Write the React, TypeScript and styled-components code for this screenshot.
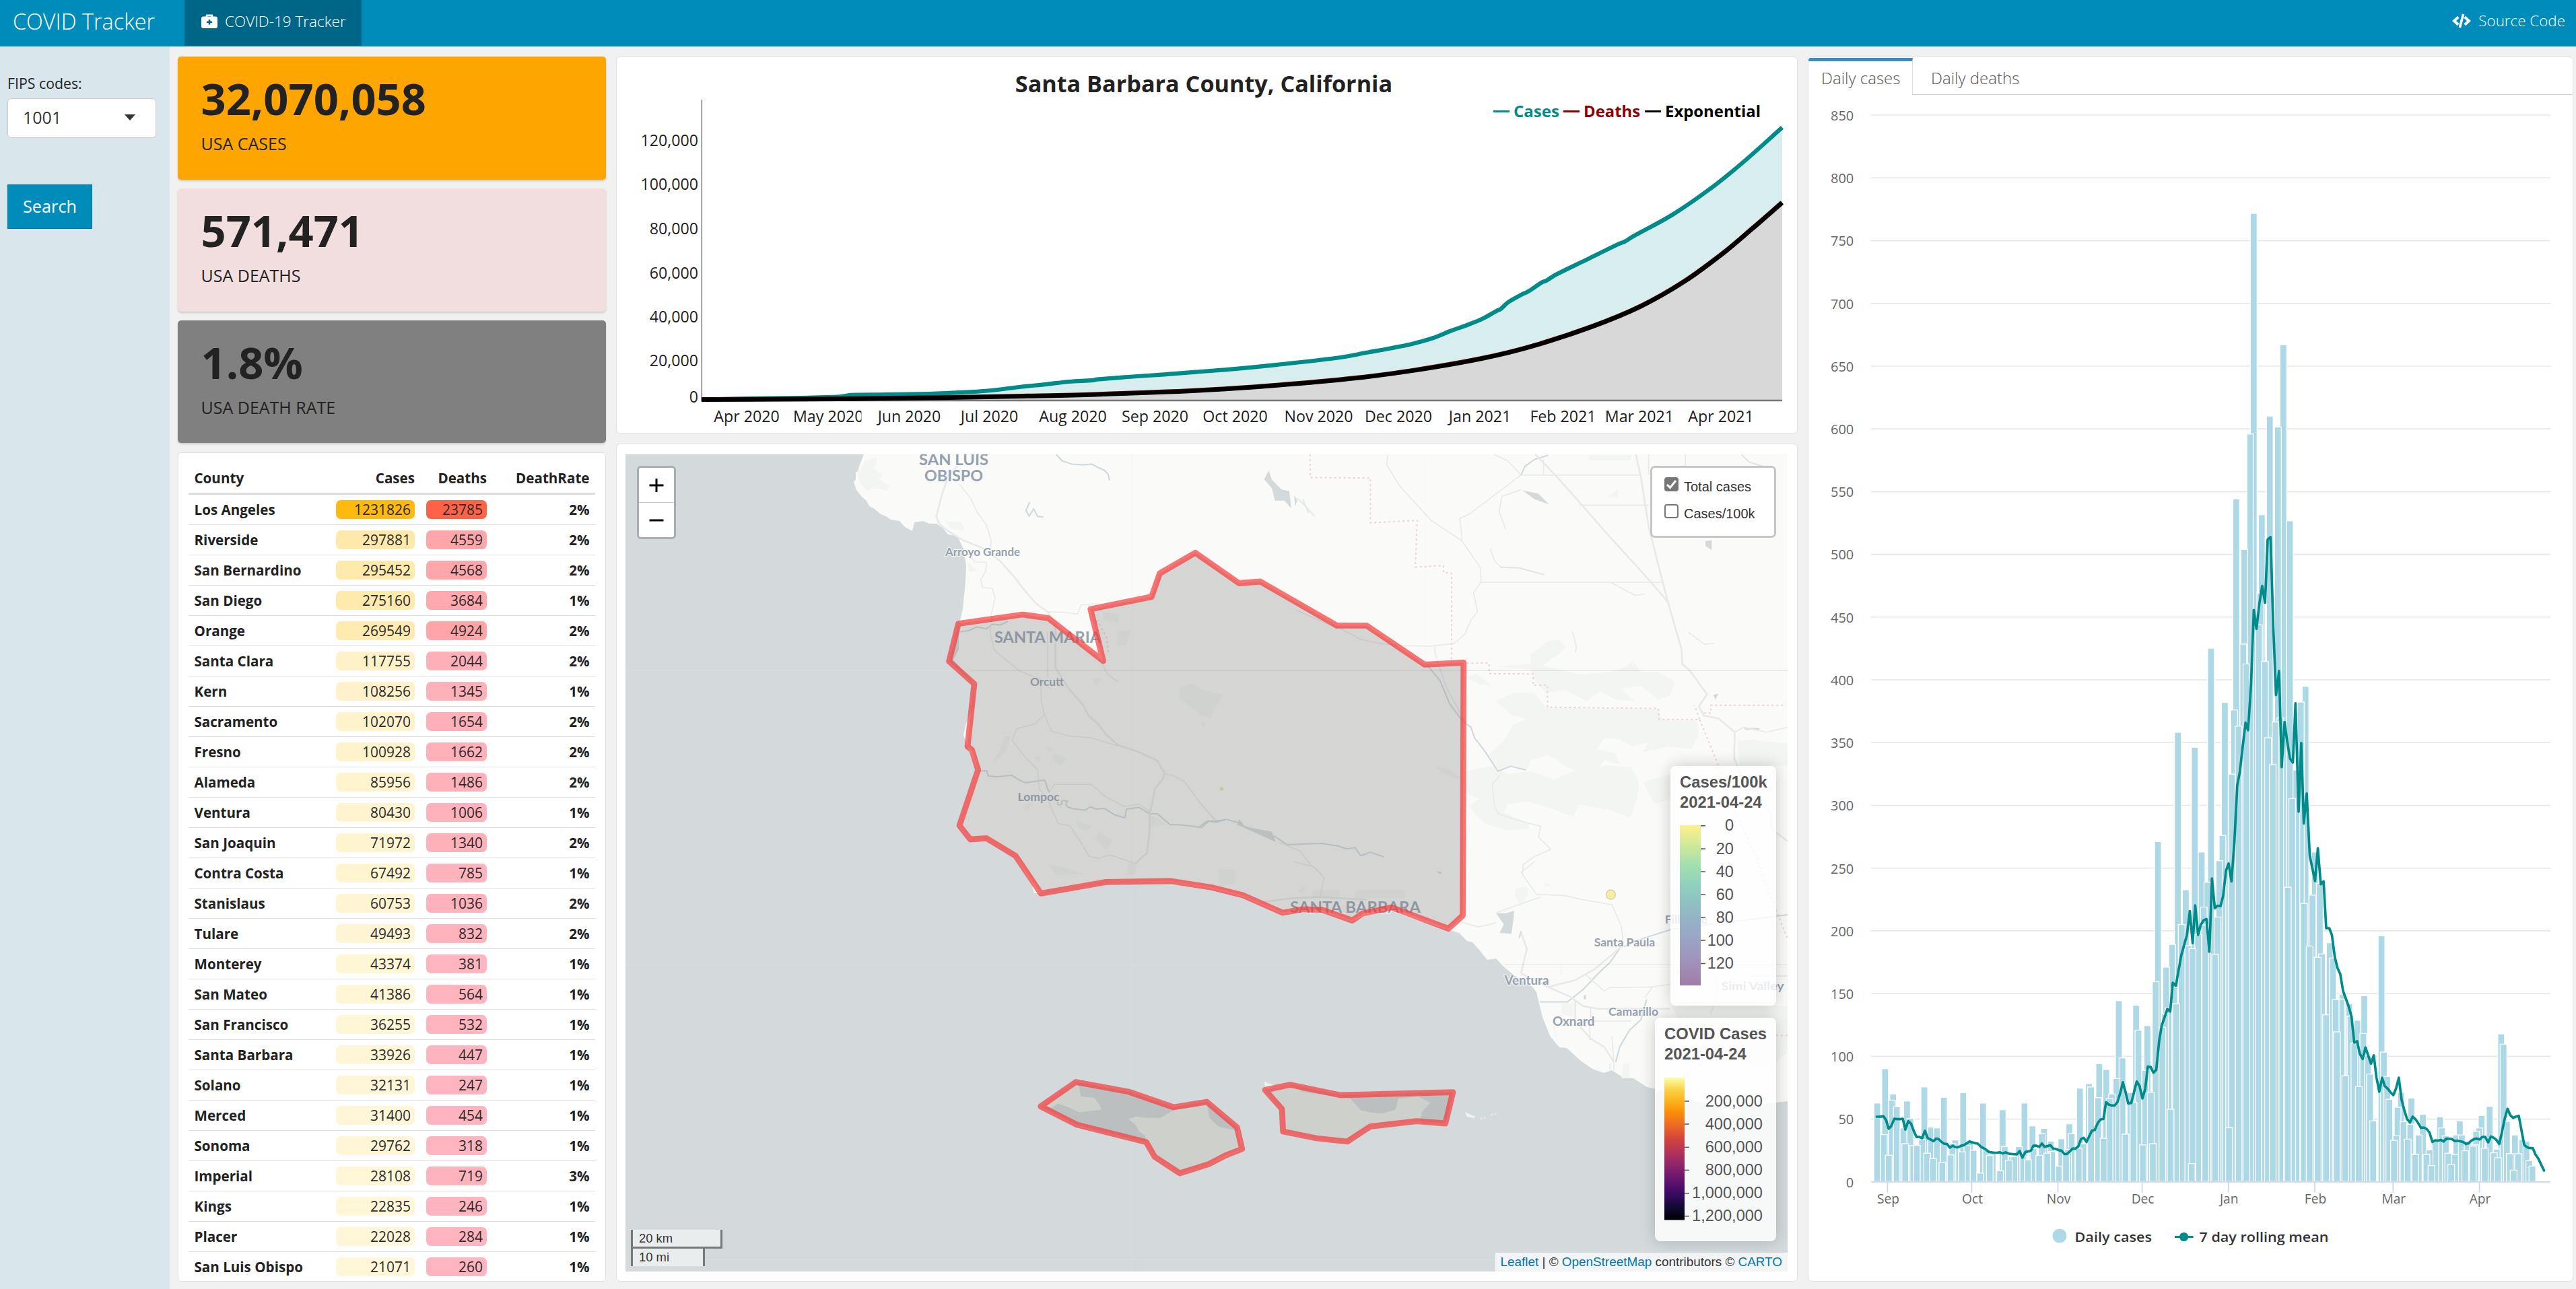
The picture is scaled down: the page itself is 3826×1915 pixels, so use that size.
import React from "react";
import styled, { createGlobalStyle } from "styled-components";

const GlobalStyle = createGlobalStyle`
  *, *::before, *::after { box-sizing: border-box; }
  html, body, #root { height: 100%; }
  body {
    margin: 0;
    background: #f1f1f1;
    color: #222;
    font-family: "Open Sans", "Noto Sans", sans-serif;
    overflow: hidden;
  }
`;

/* ---------- shell ---------- */

const Page = styled.div`
  width: 3826px;
  height: 1915px;
  display: flex;
  flex-direction: column;
`;

const Navbar = styled.header`
  flex: none;
  height: 69px;
  background: #008cba;
  border-bottom: 1px solid #0081ab;
  color: #fff;
  display: flex;
  align-items: stretch;
`;

const Brand = styled.div`
  width: 274px;
  padding-left: 19px;
  font-size: 32.4px;
  font-weight: 300;
  line-height: 63px;
  white-space: nowrap;
`;

const NavTab = styled.div`
  width: 263px;
  background: #006687;
  display: flex;
  align-items: center;
  gap: 11px;
  padding: 0 0 6px 25px;
  font-size: 22.5px;
  font-weight: 300;
  white-space: nowrap;
`;

const SourceLink = styled.div`
  margin-left: auto;
  padding: 0 16px 7px 0;
  display: flex;
  align-items: center;
  gap: 11px;
  font-size: 22.4px;
  font-weight: 300;
`;

const Body = styled.div`
  flex: 1;
  display: flex;
  min-height: 0;
`;

const Sidebar = styled.aside`
  flex: none;
  width: 252px;
  background: #d9e7ec;
  border-right: 1px solid #e2e8ea;
  padding: 41px 0 0 11px;
  display: flex;
  flex-direction: column;
  align-items: flex-start;
`;

const FieldLabel = styled.label`
  font-size: 21.3px;
  line-height: 28px;
  padding-left: 0;
  margin-bottom: 8px;
`;

const Select = styled.div`
  width: 221px;
  height: 59px;
  border: 1px solid #ccc;
  border-radius: 6px;
  background: #fff;
  display: flex;
  align-items: center;
  justify-content: space-between;
  padding: 0 30px 3px 22px;
  font-size: 25px;
  color: #333;
`;

const Caret = styled.span`
  border: 8px solid transparent;
  border-top: 9px solid #333;
  border-bottom: 0;
`;

const SearchButton = styled.button`
  width: 126px;
  height: 66px;
  margin-top: 69px;
  border: 1px solid #0079a1;
  background: #008cba;
  color: #fff;
  font: 400 25.3px "Open Sans", sans-serif;
  padding: 0 0 2px;
`;

const Dashboard = styled.main`
  flex: 1;
  display: grid;
  grid-template-columns: 636px 1755px 1137px;
  column-gap: 15px;
  padding: 15px 0 11px 12px;
`;

const Column = styled.section`
  display: flex;
  flex-direction: column;
  min-height: 0;
`;

const Card = styled.div<{ $h?: number; $gap?: number }>`
  background: #fff;
  border: 1px solid #e1e1e1;
  border-radius: 6px;
  flex: ${(p) => (p.$h ? "none" : "1")};
  height: ${(p) => (p.$h ? p.$h + "px" : "auto")};
  margin-bottom: ${(p) => p.$gap ?? 0}px;
  min-height: 0;
  overflow: hidden;
`;

/* ---------- value boxes ---------- */

const ValueBox = styled.div<{ $bg: string; $h: number; $gap: number }>`
  flex: none;
  height: ${(p) => p.$h}px;
  margin-bottom: ${(p) => p.$gap}px;
  background: ${(p) => p.$bg};
  border-radius: 5px;
  box-shadow: 0 2px 3px rgba(0, 0, 0, 0.16);
  padding: 24px 34.5px 0;
`;

const Value = styled.div`
  font-size: 65px;
  font-weight: 700;
  line-height: 76px;
`;

const Caption = styled.div`
  font-size: 25px;
  line-height: 30px;
  margin-top: 14px;
`;

/* ---------- county table ---------- */

const TableCard = styled(Card)`
  padding: 9px 15px 0;
`;

const Table = styled.table`
  width: 604px;
  table-layout: fixed;
  border-spacing: 0;
  font-size: 20.6px;
  font-weight: 700;
`;

const Th = styled.th<{ $w: number; $left?: boolean }>`
  width: ${(p) => p.$w}px;
  height: 53px;
  padding: 5px 8.5px 0;
  text-align: ${(p) => (p.$left ? "left" : "right")};
  font-weight: 700;
  border-bottom: 3px solid #ddd;
`;

const Td = styled.td<{ $left?: boolean }>`
  height: 45px;
  padding: 0 8.5px;
  text-align: ${(p) => (p.$left ? "left" : "right")};
  border-bottom: 1px solid #ddd;
`;

const Pill = styled.span`
  display: block;
  height: 28px;
  line-height: 29px;
  border-radius: 7px;
  padding-right: 6px;
  font-size: 21px;
  font-weight: 400;
  color: #2b2b2b;
`;

type County = [string, number, number, number];
const counties: County[] = [
  ["Los Angeles", 1231826, 23785, 2],
  ["Riverside", 297881, 4559, 2],
  ["San Bernardino", 295452, 4568, 2],
  ["San Diego", 275160, 3684, 1],
  ["Orange", 269549, 4924, 2],
  ["Santa Clara", 117755, 2044, 2],
  ["Kern", 108256, 1345, 1],
  ["Sacramento", 102070, 1654, 2],
  ["Fresno", 100928, 1662, 2],
  ["Alameda", 85956, 1486, 2],
  ["Ventura", 80430, 1006, 1],
  ["San Joaquin", 71972, 1340, 2],
  ["Contra Costa", 67492, 785, 1],
  ["Stanislaus", 60753, 1036, 2],
  ["Tulare", 49493, 832, 2],
  ["Monterey", 43374, 381, 1],
  ["San Mateo", 41386, 564, 1],
  ["San Francisco", 36255, 532, 1],
  ["Santa Barbara", 33926, 447, 1],
  ["Solano", 32131, 247, 1],
  ["Merced", 31400, 454, 1],
  ["Sonoma", 29762, 318, 1],
  ["Imperial", 28108, 719, 3],
  ["Kings", 22835, 246, 1],
  ["Placer", 22028, 284, 1],
  ["San Luis Obispo", 21071, 260, 1],
];

const mix = (a: number[], b: number[], t: number) =>
  `rgb(${a.map((v, i) => Math.round(v + (b[i] - v) * t)).join(",")})`;
const caseTint = (v: number) => mix([255, 248, 220], [255, 185, 15], v / 1231826);
const deathTint = (v: number) => mix([255, 182, 193], [255, 99, 71], v / 23785);

function CountyTable() {
  return (
    <TableCard>
      <Table>
        <thead>
          <tr>
            <Th $w={210.5} $left>County</Th>
            <Th $w={134}>Cases</Th>
            <Th $w={107}>Deaths</Th>
            <Th $w={152.5}>DeathRate</Th>
          </tr>
        </thead>
        <tbody>
          {counties.map(([name, cases, deaths, rate]) => (
            <tr key={name}>
              <Td $left>{name}</Td>
              <Td><Pill style={{ background: caseTint(cases) }}>{cases}</Pill></Td>
              <Td><Pill style={{ background: deathTint(deaths) }}>{deaths}</Pill></Td>
              <Td>{rate}%</Td>
            </tr>
          ))}
        </tbody>
      </Table>
    </TableCard>
  );
}

/* ---------- cumulative chart ---------- */

const ChartTitle = styled.h2`
  margin: 0;
  height: 60px;
  padding-top: 16px;
  font-size: 34.2px;
  line-height: 46px;
  font-weight: 700;
  text-align: center;
  padding-right: 9px;
  white-space: nowrap;
`;

const Svg = styled.svg`
  display: block;
  font-family: "Open Sans", "Noto Sans", sans-serif;
`;

type Pt = [number, number];

/* Catmull-Rom spline through the samples, written as cubic segments. */
const spline = (pts: Pt[]) =>
  pts.reduce((d, p, i) => {
    if (i === 0) return `M${p[0]} ${p[1]}`;
    const a = pts[Math.max(i - 2, 0)];
    const b = pts[i - 1];
    const n = pts[Math.min(i + 1, pts.length - 1)];
    const run = (p[0] - b[0]) / 3;
    const s1 = (p[1] - a[1]) / (p[0] - a[0] || 1);
    const s2 = (n[1] - b[1]) / (n[0] - b[0] || 1);
    return `${d}C${b[0] + run} ${b[1] + s1 * run} ${p[0] - run} ${p[1] - s2 * run} ${p[0]} ${p[1]}`;
  }, "");

const casePath = spline([[1042,593.5],[1117,592],[1190,591],[1244,589.7],[1256,588],[1263,586.8],[1320,586.2],[1378,585],[1420,583.3],[1467,580.5],[1518,574.5],[1555,570.8],[1588,567],[1624,564.8],[1629,563.6],[1675,560],[1729,556.3],[1825,548.8],[1897,541.8],[1991,531],[2030,523.8],[2065,517.5],[2097,511],[2128,502.3],[2155,491.5],[2180,482.5],[2202,473.5],[2224,461.3],[2229,459],[2240,449],[2261,437],[2267,434.5],[2273,431],[2290,419.5],[2296,417.3],[2310,408.5],[2355,386.5],[2405,362],[2413,359],[2425,351.5],[2484,319],[2542,279],[2589,241],[2647,189.4]]);
const expPath = spline([[1042,593.8],[1244,593],[1410,590.8],[1520,588.8],[1627,586.4],[1780,580.5],[1897,572.7],[2014,562],[2102,550.3],[2202,532.7],[2278,514],[2366,485],[2437,455.4],[2501,419],[2560,376],[2601,341.5],[2647,301.5]]);

const cumTicks: [string, number][] = [
  ["120,000", 208], ["100,000", 273.5], ["80,000", 339.5], ["60,000", 405],
  ["40,000", 470.5], ["20,000", 535.5], ["0", 589.7],
];
const cumMonths: [string, number][] = [
  ["Apr 2020", 1109], ["May 2020", 1229], ["Jun 2020", 1350.5], ["Jul 2020", 1469.5],
  ["Aug 2020", 1593.5], ["Sep 2020", 1715.5], ["Oct 2020", 1834.5], ["Nov 2020", 1958.5],
  ["Dec 2020", 2077], ["Jan 2021", 2198], ["Feb 2021", 2321.5], ["Mar 2021", 2435],
  ["Apr 2021", 2556],
];
const cumLegend: [string, string, number, number, number][] = [
  ["Cases", "#008b8b", 2218, 2248, 68],
  ["Deaths", "#8b0000", 2322, 2352, 84],
  ["Exponential", "#000", 2443, 2473, 142],
];

function CumulativeChart() {
  return (
    <Card $h={560} $gap={15}>
      <ChartTitle>Santa Barbara County, California</ChartTitle>
      <Svg width="1753" height="498" viewBox="916 145 1753 498">
        <path d={`${casePath}V595H1042Z`} fill="#d8eeee" />
        <path d={`${expPath}V595H1042Z`} fill="#d8d8d8" />
        <path d="M1042.5 148V596" stroke="#222" strokeWidth="1" shapeRendering="crispEdges" />
        <path d="M1042 595H2647" stroke="#777" strokeWidth="2.4" />
        <path d={casePath} fill="none" stroke="#008b8b" strokeWidth="6.2" />
        <path d={expPath} fill="none" stroke="#5a0000" strokeWidth="6.2" transform="translate(-0.4 -0.8)" />
        <path d={expPath} fill="none" stroke="#000" strokeWidth="6.2" />
        {cumTicks.map(([t, y]) => (
          <text key={t} x="1037" y={y + 8.5} textAnchor="end" fontSize="23.2" fill="#1c1c1c">{t}</text>
        ))}
        {cumMonths.map(([t, x], i) => (
          <React.Fragment key={t}>
            <clipPath id={`m${i}`}><rect x={x - 51} y="600" width="101.5" height="40" /></clipPath>
            <g clipPath={`url(#m${i})`}>
              <text x={t.startsWith("May") || t.startsWith("Nov") ? x - 51 : x}
                textAnchor={t.startsWith("May") || t.startsWith("Nov") ? "start" : "middle"}
                y="626.8" fontSize="23.2" fill="#1c1c1c">{t}</text>
            </g>
          </React.Fragment>
        ))}
        {cumLegend.map(([t, c, lx, tx, w]) => (
          <React.Fragment key={t}>
            <path d={`M${lx} 165.5h24`} stroke={c} strokeWidth="3" />
            <text x={tx} y="174" fontSize="23" fontWeight="700" fill={c} textLength={w} lengthAdjust="spacingAndGlyphs">{t}</text>
          </React.Fragment>
        ))}
      </Svg>
    </Card>
  );
}

/* ---------- map ---------- */

const MapFrame = styled.div`
  position: relative;
  width: 1726px;
  height: 1214px;
  margin: 15px 0 0 13px;
  font-family: "Liberation Sans", Arial, sans-serif;
`;

const ZoomControl = styled.div`
  position: absolute;
  left: 17px;
  top: 17px;
  width: 58px;
  height: 109px;
  border: 3px solid #a9aeb0;
  border-radius: 6px;
  background: #fff;
  display: grid;
  grid-template-rows: 51px 1fr;
`;

const ZoomKey = styled.div`
  display: flex;
  align-items: center;
  justify-content: center;
  & + & { border-top: 1px solid #ccc; }
`;

const LayerBox = styled.div`
  position: absolute;
  right: 17px;
  top: 17px;
  width: 187px;
  height: 107px;
  border: 3px solid #c6c6c5;
  border-radius: 7px;
  background: #fff;
  padding: 14px 0 0 18px;
  display: flex;
  flex-direction: column;
  gap: 16px;
`;

const LayerOption = styled.div`
  display: flex;
  gap: 8px;
  height: 24px;
  font-size: 20px;
  line-height: 28px;
  color: #333;
`;

const CheckBox = styled.span<{ $on?: boolean }>`
  width: 21px;
  height: 21px;
  border: 2px solid #767676;
  border-radius: 4px;
  background: ${(p) => (p.$on ? "#767676" : "#fff")};
  display: flex;
  align-items: center;
  justify-content: center;
`;

const Legend = styled.div<{ $top: number; $w: number; $h: number }>`
  position: absolute;
  right: 17px;
  top: ${(p) => p.$top}px;
  width: ${(p) => p.$w}px;
  height: ${(p) => p.$h}px;
  border-radius: 8px;
  background: rgba(255, 255, 255, 0.8);
  box-shadow: 0 0 23px rgba(0, 0, 0, 0.2);
  padding: 9px 0 0 14px;
  color: #555;
`;

const LegendTitle = styled.div`
  font-size: 23.8px;
  font-weight: 700;
  line-height: 30px;
  white-space: nowrap;
`;

const ScaleRow = styled.div<{ $gap: number }>`
  margin-top: ${(p) => p.$gap}px;
`;

const ScaleBars = styled.div`
  position: absolute;
  left: 8px;
  top: 1152px;
  font-size: 18.4px;
  color: #333;
`;

const ScaleLine = styled.div<{ $w: number; $last?: boolean }>`
  width: ${(p) => p.$w}px;
  height: ${(p) => (p.$last ? 26 : 28)}px;
  line-height: 25px;
  padding-left: 9px;
  background: rgba(255, 255, 255, 0.5);
  border: 3px solid #777;
  border-top: 0;
  border-bottom-width: ${(p) => (p.$last ? 0 : 3)}px;
`;

const Attribution = styled.div`
  position: absolute;
  right: 0;
  bottom: 0;
  height: 28px;
  padding: 0 8px;
  line-height: 28px;
  font-size: 18.9px;
  color: #333;
  white-space: nowrap;
  background: rgba(255, 255, 255, 0.7);
  a { color: #0078a8; }
`;

const county =
  "1423.4,926.6 1518.7,913 1557,918.4 1638.6,982 1619.7,905 1710.4,886.6 1722.5,851.9 1775.3,821.2 1840.3,866.5 1871.8,864 1985.5,929.4 2029.7,929.4 2115.8,987.4 2173.8,984.5 2172.5,1360.2 2151.3,1379.6 2066.9,1348 2023.9,1357 2008.4,1367.5 1963.6,1351.7 1935,1350.9 1905,1356 1846,1330 1800,1318.5 1739.7,1309 1643,1310.4 1546,1327.4 1508.4,1271.5 1465.3,1245.4 1441.2,1247 1425,1226.6 1452.7,1143.7 1443.5,1114 1437,1109 1447,1016 1409.6,982.5";
const westIsles =
  "1597.9,1607.5 1676.5,1622 1743,1645 1792.5,1637 1837.3,1674.9 1844.8,1707 1820,1716.6 1795,1729.6 1752.3,1743 1715,1718.6 1702.4,1696.7 1599.6,1671 1545.7,1643.7";
const eastIsle =
  "1879,1619.4 1916,1611.5 1990.6,1627 2158,1622.6 2146.7,1669 2104,1665.6 2035,1673.7 2001,1696 1955,1691 1905.6,1681 1904,1647.7";

const land =
  "M1283 675L1277 690 1274 700 1271 702 1271 712 1268 716 1272 728 1280 738 1287 744 1291 752 1299 756 1308 764 1316 767 1323 772 1336 774 1344 783 1355 789 1358 776 1371 774 1380 778 1391 778 1400 784 1408 794 1420 796 1424 801 1431 815 1435 840 1434 864 1430 905 1424 930 1424 965 1416 980 1447 1016 1446 1050 1435 1075 1431 1092 1437 1109 1452 1144 1425 1227 1441 1247 1465 1245 1508 1271 1533 1315 1536 1327 1546 1327 1643 1310 1740 1310 1800 1320 1846 1332 1905 1358 1930 1356 1964 1355 2008 1369 2030 1360 2067 1352 2090 1362 2151 1381 2167 1386 2179 1398 2187 1400 2196 1410 2209 1426 2222 1424 2233 1436 2243 1444 2253 1452 2276 1466 2282 1474 2285 1487 2291 1511 2302 1539 2316 1556 2327 1557 2348 1576 2365 1588 2382 1594 2394 1590 2411 1601 2426 1602 2446 1615 2460 1618 2517 1636 2552 1642 2569 1663 2589 1644 2638 1638 2655 1636V675Z";

type Label = [string, number, number, number, number];
const places: Label[] = [
  ["SAN LUIS", 1365, 691, 103, 21], ["OBISPO", 1373, 714.7, 87, 21],
  ["Arroyo Grande", 1404, 826, 111, 16], ["SANTA MARIA", 1477, 954.6, 158, 21],
  ["Orcutt", 1530, 1019, 50, 16], ["Lompoc", 1511.5, 1190, 62, 16],
  ["SANTA BARBARA", 1916, 1356, 194, 21], ["Ventura", 2234.5, 1462.5, 66, 17],
  ["Oxnard", 2306, 1524, 62.5, 17], ["Camarillo", 2389, 1508.5, 74, 16],
  ["Santa Paula", 2367.7, 1405.5, 90.5, 16], ["Fillmore", 2472.7, 1371.5, 63, 16],
  ["Simi Valley", 2556.5, 1470.5, 93, 16],
];

/* Tile detail is digitised per quadrant; each frame carries its own origin. */
const NW = "translate(920 660) scale(.57398 .40816)";
const NE = "translate(1780 660) scale(.57398 .40816)";
const SW = "translate(920 1280) scale(.57398 .40497)";
const SE = "translate(1800 1280) scale(.57398 .40497)";

const Trace = styled.path`
  fill: none;
  vector-effect: non-scaling-stroke;
  stroke-linejoin: round;
`;
const Road = styled(Trace)<{ $w?: number }>`
  stroke: #e8e9e8;
  stroke-width: ${(p) => p.$w ?? 1.6}px;
`;
const River = styled(Trace)`
  stroke: #ced8de;
  stroke-width: 2px;
`;
const Border = styled(Trace)`
  stroke: #edd2d6;
  stroke-width: 2px;
  stroke-dasharray: 3 4;
`;
const Park = styled.path`
  fill: #f2f5f2;
`;
const Lake = styled.path`
  fill: #d4dadc;
`;

function BaseMap() {
  return (
    <Svg width="1726" height="1214" viewBox="929 675 1726 1214">
      <rect x="929" y="675" width="1726" height="1214" fill="#d4dadc" />
      <path d={land} fill="#fafaf8" />
      <g transform={NW}>
        <Park d="M635 60L668 50 660 90 680 110 672 130 700 150 690 170 665 160 640 168 622 140 615 110Z" />
        <Park d="M845 280L885 285 893 315 860 308Z M900 425L925 462 905 462Z" />
        <Park d="M1450 885L1480 870 1510 895 1560 912 1527 995 1480 960 1450 930Z M1500 1005L1518 1015 1512 1032Z" />
        <Park d="M995 1060L1012 1065 1000 1120 965 1162 985 1110Z M1125 1125L1160 1145 1140 1170 1125 1155Z M1100 1100L1125 1110 1112 1120Z M1070 1140L1092 1135 1085 1160Z" />
        <Park d="M1180 1370L1222 1390 1210 1410 1190 1400Z M1240 1405L1262 1430 1278 1440 1260 1478 1235 1440Z M1375 1350L1418 1385 1370 1395Z M1045 1315L1070 1305 1050 1340Z" />
        <Park d="M1110 1530L1150 1540 1205 1565 1130 1568Z M1225 850L1250 855 1230 880Z M1290 680L1325 675 1310 730 1285 735Z M1250 610L1295 620 1290 650 1255 640Z" />
        <Park d="M1315 1525L1340 1520 1335 1568 1313 1568Z" />
        <River d="M1130 37L1145 60 1170 72 1200 75 1222 72 1235 82 1255 95 1265 110 1268 132 M1062 210L1052 240 1060 262 1072 235 1082 262 1097 265" />
        <River d="M880 683L905 678 925 665 950 672 965 655 985 658 1005 645" />
        <River d="M930 1190L950 1188 955 1208 980 1210 1015 1205 1035 1222 1050 1232 1070 1228 1100 1222 1112 1268 M1135 1300Q1130 1320 1145 1310 1140 1290 1160 1300 1145 1320 1180 1328L1205 1332 1218 1320 1235 1328 1255 1325 1280 1348 1308 1360 1312 1328 1345 1322 1372 1345 1392 1345 1425 1385 1450 1385 1480 1390 1507 1395 1525 1372 1568 1368" />
        <Road $w={2.6} d="M880 70L850 120 833 190 820 265 828 290 850 315 890 350 940 378 985 425 1020 480 1050 535 1080 582 1108 610 1128 650 1128 812 1160 885 1200 950 1215 990 1240 1020 1258 1055 1290 1095 1340 1118 1392 1152 1410 1195 1408 1215 1385 1255 1378 1310 1372 1345 1372 1410 1365 1488 1335 1525" />
        <Road d="M880 145L910 200 925 245 950 295 962 350 960 390 M892 380L920 428 950 430 948 460 935 495 940 522 965 525 972 560 962 620 960 690 970 750 1035 825 1090 855 1092 940 1100 985 1118 1045 1165 1062 1220 1068 1290 1098" />
        <Road d="M1100 985L1075 1018 1028 1035 1017 1078 1050 1140 1083 1185 1085 1250 1112 1305 1135 1380 1165 1388 1190 1440 1215 1500 1240 1507 1270 1495 1335 1525 M1108 610L1150 612 1185 618 1195 585 1235 580 M1108 680V850 M1112 1268L1125 1238H1222L1255 1280 1305 1318 1345 1310 1375 1340 M1410 1200L1430 1205 1460 1225 1500 1300 1545 1378 M1250 800L1260 832 1290 865" />
        <Border d="M1235 640L1260 700 1265 760" />
      </g>
      <g transform={NE}>
        <Park d="M860 765L905 715 935 712 950 740 935 762 905 790 890 805 960 830 985 838 1060 830 1090 820 1125 790 1145 830 1190 830 1235 865 1220 915 1190 930 1145 880 1095 890 1130 935 1080 930 1040 900 1005 935 950 895 900 905 870 860 860 820 775 808 860 800Z" />
        <Park d="M690 850L720 835 760 880 730 875Z M770 935L815 905 870 905 900 960 1100 965 1190 965 1200 1005 1290 1005 1295 1060 1275 1110 1220 1100 1150 1120 1165 1085 1120 1100 1090 1075 1050 1070 1030 1110 1080 1125 1090 1165 1050 1150 1020 1200 960 1180 905 1130 860 1150 850 1185 810 1172 775 1190 750 1130 790 1080 815 1020 850 1000 810 985Z" />
        <Park d="M690 1190L760 1170 800 1200 860 1190 920 1220 985 1180 1060 1170 1120 1175 1140 1230 1135 1290 1118 1360 1060 1330 985 1310 970 1355 900 1320 850 1300 800 1310 790 1340 855 1380 855 1400 800 1405 740 1380 700 1320 725 1290 690 1270Z M1150 1230L1225 1200V1290L1180 1310Z M1395 1080L1430 1075 1524 1090V1170H1400Z" />
        <Park d="M0 890L62 912 30 995 0 985Z M1010 40H1120V58H1010Z M1060 190L1085 165 1088 195Z M612 1170L650 1185 690 1225 640 1205Z" />
        <Lake d="M182 95L190 130 215 165 235 170 240 232 222 205 198 205 190 160 170 128Z M248 185L256 205 250 225Z M838 168L880 180 908 220 870 200Z M1312 352L1328 350V385L1312 370Z M1332 912L1345 908 1338 930Z M1410 1032L1452 1033 1450 1040 1415 1038Z M105 1365L120 1390 150 1400 190 1410 200 1448 165 1425 125 1400 100 1385Z" />
        <River d="M255 195L280 230 300 262 M270 200L285 250" strokeOpacity=".5" />
        <River d="M835 112L845 80 870 55 905 40 M590 800L625 860 650 945 685 1010 705 1030 715 1070 740 1115 775 1190 808 1172 848 1186 M0 1395L22 1372 50 1375 70 1365 110 1380 M195 1425L230 1458 275 1455 320 1453 360 1462 385 1473 405 1468 420 1498 445 1485 480 1502" />
        <River d="M780 447L830 450 895 475 M1405 37L1425 65 1465 82" strokeOpacity=".6" />
        <Road $w={2.6} d="M872 37L925 115 985 210 1060 330 1170 500 1215 575 1228 640 1250 745 1252 800 1272 825 1316 910 1295 955 1308 988 1345 998 1388 1048 1386 1140 1410 1230 1480 1340 1482 1400 1524 1445 M1132 37L1145 120 1165 300 1200 495 1215 575" />
        <Road d="M490 37L487 75 520 150 600 275 682 352 730 450 731 503 1200 503 M682 352L680 310 676 270 700 255 835 112H1142 M985 222H1165 M893 55V112 M765 37L800 60 835 112 M835 165L785 190 778 245 795 310 M1165 37V110 M1260 37V85" />
        <Road d="M731 503L712 540 722 610 705 640 690 690 662 725 600 735 530 733 470 725 420 710 360 665 M612 735V760L640 880 690 1010 M755 380L765 420 782 447 M1065 502L1130 550 1155 545 M968 680L978 740 975 758 M1268 685L1310 728 1335 724 M780 1205L760 1240 765 1310 775 1345 830 1370 885 1390 880 1430 912 1475 870 1500 840 1530 838 1568 M0 1300L45 1368 M210 1450L262 1480 290 1530 320 1568 M1388 1048L1410 1030 1470 1048 1524 1030 M255 605L360 670" />
        <Border d="M289 37V121L445 123V286L566 277 561 447 634 442V467L655 470V795 M694 797H752V835L866 836V877H903V957L1190 962 1192 1002H1297L1283 950 M1308 978H1326V950H1520 M1297 1002L1345 1168 1360 1250 1460 1550" />
      </g>
      <g transform={SE}>
        <Park d="M785 100L815 90 818 120 800 160 785 130Z M860 80H875V90H860Z M905 385V420L900 400Z M905 520H935V570L905 560Z M1065 740H1080V795H1060Z M1190 530H1490V700L1440 760 1300 700 1220 620Z" />
        <Park d="M15 30H60V80L20 95Z M220 110L240 85V120Z M260 105H330V130H260Z M370 105H500V135H370Z" />
        <Lake d="M735 188L760 190 782 180 780 215 775 265 745 262 755 230Z M580 36L595 38 592 46Z M962 490H968V505H962Z" />
        <River d="M800 255L795 280 M1055 320L1030 370 1000 410 960 470 920 515H848 M1065 312L1120 280 1190 248 1490 195 M1125 505L1110 580 1080 620 1055 680 1045 735" />
        <Road $w={2.6} d="M800 410L815 320 800 260 M800 410L870 460 930 498 960 530 1000 540H1185 M870 460L940 435 990 395 1060 312 M135 148L200 135 280 130 400 140 M940 510V585L980 650 1015 680 1040 735" />
        <Road d="M640 220L690 240 735 225 M735 188L790 160 850 130 M835 0L800 40 840 120 915 125 960 140 1035 158 1060 240 1065 312 M965 412L1015 475 1030 462 1140 460 1185 450 M1140 460L1120 500 M980 535V585H1085 M978 585V655 M1035 640L1040 735V765 M210 0L265 20 290 60 280 130 M1030 740V765 M1390 420H1490 M1300 410L1310 480 1290 560" />
        <path d="M885 605L890 640" stroke="#e6e7e6" strokeWidth="5" strokeDasharray="2 6" />
        <Border d="M1410 0L1490 285 M1460 638H1490 M1220 790L1280 725" />
        <path d="M135 808L165 822 150 832 138 830Z M655 920L682 935 678 942 660 936Z" fill="#f1f1ef" />
        <Trace d="M695 944L712 938 M722 930L740 922" stroke="#eee3e3" strokeWidth="2.5" strokeDasharray="3 2" />
      </g>
      <g transform={SW}>
        <path d="M1181 812L1190 828 1194 862 1228 866 1240 888 1248 910 1190 920 1160 900 1135 888 1120 902 1092 898Z" fill="#f0f2ed" />
        <path d="M1318 945L1335 935 1365 940 1400 940 1435 910 1520 888 1527 940 1550 972 1605 990 1612 1056 1525 1110 1450 1143 1385 1083 1363 1029 1360 1005 1345 990 1335 965Z" fill="#f0f2ed" />
      </g>
      <g transform={SE}>
        <path d="M138 838L202 816 235 845 270 852 332 862 358 870 375 895 385 912 410 920 440 925 475 910 482 870 535 862 565 885 545 915 538 950 410 972 350 1027 270 1015 184 990 181 908Z" fill="#f0f2ed" />
      </g>
      <path d="M1681.5 675V1310 M2117 675V1310" stroke="#000" strokeOpacity=".02" />
      <path d="M1440 996H2655" stroke="#000" strokeOpacity=".08" strokeWidth="1.6" />
      <path d="M929 996H1440" stroke="#fff" strokeOpacity=".16" />
      <path d="M2233 1433.5H2655" stroke="#000" strokeOpacity=".1" />
      <path d="M929 1433.5H2233 M929 1871.5H2655 M1681.5 1320V1889" stroke="#fff" strokeOpacity=".08" />
      <g fontFamily="Lato, 'Open Sans', sans-serif" fontWeight="700" fill="#94a1af" stroke="#fafaf8" strokeWidth="2.5" strokeOpacity=".75" paintOrder="stroke">
        {places.map(([t, x, y, w, s]) => (
          <text key={t} x={x} y={y} fontSize={s + 1} textLength={w} lengthAdjust="spacingAndGlyphs">{t}</text>
        ))}
      </g>
      <g fill="#808080" fillOpacity=".3" stroke="#f53b3b" strokeOpacity=".7" strokeWidth="8.8" strokeLinejoin="round">
        <polygon points={county} />
        <polygon points={westIsles} />
        <polygon points={eastIsle} />
      </g>
      <circle cx="2392.3" cy="1329.2" r="7" fill="#f3efa4" stroke="#cfcca6" strokeWidth="1.2" />
      <circle cx="1814.4" cy="1171.8" r="2.6" fill="#c8c79c" />
    </Svg>
  );
}

type ScaleProps = {
  id: string; w: number; barW: number; h: number; stops: string[];
  ticks: [string, number][]; labelX: number;
};

const ScaleSvg = styled(Svg)`
  overflow: visible;
  font-family: "Liberation Sans", Arial, sans-serif;
`;

function ColorScale({ id, w, barW, h, stops, ticks, labelX }: ScaleProps) {
  return (
    <ScaleSvg width={w} height={h + 16} viewBox={`0 -8 ${w} ${h + 16}`}>
      <linearGradient id={id} x1="0" x2="0" y1="0" y2="1">
        {stops.map((c, i) => (
          <stop key={i} offset={i / (stops.length - 1)} stopColor={c} />
        ))}
      </linearGradient>
      <rect width={barW} height={h} fill={`url(#${id})`} />
      {ticks.map(([t, y]) => (
        <React.Fragment key={t}>
          <path d={`M${barW} ${y}h7`} stroke="#555" strokeWidth="1.5" />
          <text x={labelX} y={y + 7.5} textAnchor="end" fontSize="23.6" fill="#555">{t}</text>
        </React.Fragment>
      ))}
    </ScaleSvg>
  );
}

function MapPanel() {
  return (
    <Card>
      <MapFrame>
        <BaseMap />
        <ZoomControl>
          <ZoomKey>
            <svg width="22" height="22" viewBox="0 0 22 22" stroke="#000" strokeWidth="3"><path d="M.5 11h21M11 1v20" /></svg>
          </ZoomKey>
          <ZoomKey>
            <svg width="22" height="22" viewBox="0 0 22 22" stroke="#000" strokeWidth="3"><path d="M.5 11h21" /></svg>
          </ZoomKey>
        </ZoomControl>
        <LayerBox>
          <LayerOption>
            <CheckBox $on>
              <svg width="17" height="17" viewBox="0 0 17 17" fill="none" stroke="#fff" strokeWidth="3"><path d="M2 9l4.5 4.5L15 3" /></svg>
            </CheckBox>
            Total cases
          </LayerOption>
          <LayerOption>
            <CheckBox />
            Cases/100k
          </LayerOption>
        </LayerBox>
        <Legend $top={463} $w={157} $h={356}>
          <LegendTitle>Cases/100k<br />2021-04-24</LegendTitle>
          <ScaleRow $gap={11}>
            <ColorScale id="per100k" w={143} barW={31} h={238} labelX={80}
              stops={["#fdf08d", "#d0ea98", "#a2dfae", "#8fd0be", "#8fbfc4", "#97aec6", "#9c9fc4", "#a08fb8", "#a07ba6"]}
              ticks={[["0", 0.8], ["20", 35], ["40", 69], ["60", 103], ["80", 137], ["100", 171], ["120", 205.5]]} />
          </ScaleRow>
        </Legend>
        <Legend $top={837} $w={180} $h={332}>
          <LegendTitle>COVID Cases<br />2021-04-24</LegendTitle>
          <ScaleRow $gap={12}>
            <ColorScale id="cases" w={166} barW={30} h={211.5} labelX={146}
              stops={["#fcffa4", "#f9d24a", "#fbb21a", "#f98c0a", "#ed6925", "#d8473a", "#bb3754", "#9a2a64", "#781c6d", "#570f6d", "#320a5e", "#0f092d", "#000004"]}
              ticks={[["200,000", 35], ["400,000", 69], ["600,000", 103.4], ["800,000", 137.4], ["1,000,000", 171.8], ["1,200,000", 205.8]]} />
          </ScaleRow>
        </Legend>
        <ScaleBars>
          <ScaleLine $w={136}>20 km</ScaleLine>
          <ScaleLine $w={110} $last>10 mi</ScaleLine>
        </ScaleBars>
        <Attribution>
          <a>Leaflet</a> | © <a>OpenStreetMap</a> contributors © <a>CARTO</a>
        </Attribution>
      </MapFrame>
    </Card>
  );
}

/* ---------- daily chart ---------- */

const TabBar = styled.div`
  display: flex;
  height: 56px;
  font-size: 24px;
  font-weight: 300;
  color: #555;
`;

const ActiveTab = styled.div`
  flex: none;
  width: 155px;
  border-top: 5px solid #3c8dbc;
  border-right: 1px solid #ddd;
  padding: 0 0 0 19px;
  line-height: 49px;
  margin-top: 1px;
  white-space: nowrap;
`;

const InactiveTab = styled.div`
  flex: 1;
  padding-left: 27px;
  border-bottom: 1px solid #d4d4d4;
  line-height: 61px;
`;

const leftFrame = ([x, y]: Pt): Pt => [2670 + x * 0.38265, 950 + y * 0.61543];
const rightFrame = ([x, y]: Pt): Pt => [3220 + x * 0.38648, 950 + y * 0.61543];
const peakFrame = ([x, y]: Pt): Pt => [3220 + x * 0.38648, y * 0.60587];

const autumn: Pt[] = [[297,1120],[323,1196],[328,1037],[342,1246],[354,1113],[359,1098],[373,1129],[399,1180],[413,1115],[406,1218],[426,1157],[437,1222],[451,1222],[471,1208],[480,1081],[506,1178],[491,1241],[529,1180],[514,1254],[550,1263],[556,1106],[582,1245],[600,1209],[589,1218],[626,1238],[631,1095],[657,1213],[671,1234],[647,1222],[697,1289],[708,1120],[734,1246],[745,1242],[720,1232],[774,1283],[784,1136],[792,1225],[820,1249],[808,1258],[829,1249],[847,1225],[869,1120],[864,1248],[882,1257],[900,1175],[904,1230],[926,1246],[936,1194],[945,1181],[971,1212],[957,1241],[976,1237],[1002,1272],[1012,1206],[1030,1240],[1038,1232],[1043,1170],[1052,1194],[1084,1084],[1079,1229],[1119,1073],[1096,1218],[1127,1081],[1155,1107],[1159,1025],[1186,1039],[1176,1205],[1208,1098],[1199,1109],[1226,1061],[1235,873],[1249,1011],[1280,1095],[1261,1195],[1302,884],[1292,1118],[1311,944],[1338,1041],[1328,1221],[1346,933],[1359,1094],[1367,1218],[1378,827],[1387,489],[1414,905],[1404,937],[1419,792],[1428,890],[1442,737],[1436,1135],[1464,225],[1450,840],[1457,880],[1495,605],[1479,689],[1505,740],[1521,747],[1530,261],[1518,1266]];
const winter: Pt[] = [[104,713],[118,514],[140,587],[126,647],[132,690],[154,22],[170,761],[179,671],[186,535],[198,474],[207,153],[234,326],[223,1179],[243,171],[260,210],[278,12],[290,60],[361,54],[373,238],[391,303],[402,200],[420,190],[449,599],[482,316],[466,385],[499,152],[517,114],[511,638],[544,618],[553,514],[533,741],[564,768],[572,590],[580,760],[610,733],[596,907],[622,770],[633,870],[655,869],[659,857],[638,948],[685,880],[670,1054],[690,910],[716,920],[705,975],[722,1080],[739,952],[743,861],[757,1005],[765,1050],[777,1163],[809,716],[818,997],[831,1056],[839,1111],[866,1199],[857,1210],[871,1130],[884,1094],[894,1165],[920,1171],[910,1207],[924,1108],[952,1197],[939,1244],[968,1147],[994,1233],[982,1244],[1001,1271],[1016,1212],[1034,1153],[1042,1180],[1056,1199],[1066,1241],[1077,1268],[1092,1244],[1097,1197],[1110,1163],[1118,1197],[1131,1235],[1140,1212],[1169,1221],[1160,1224],[1173,1188],[1185,1180],[1194,1150],[1206,1229],[1225,1128],[1252,1231],[1241,1240],[1257,1252],[1269,953],[1278,978],[1291,1164],[1302,1242],[1322,1197],[1317,1282],[1334,1242],[1350,1208],[1366,1212],[1377,1259],[1389,1272]];
const peak: Pt[] = [[251,1224],[282,1348],[305,1065],[318,524],[344,1455],[349,1263],[338,1533],[380,1021],[411,1048],[432,846],[457,1278]];

const AXIS_Y = 1755.8;
const bars = [...autumn.map(leftFrame), ...winter.map(rightFrame), ...peak.map(peakFrame)].sort(
  (a, b) => a[1] - b[1]
);

const meanA: Pt[] = [[307,1152],[320,1152],[333,1151],[343,1160],[353,1181],[363,1175],[375,1157],[388,1158],[398,1158],[408,1157],[418,1183],[429,1163],[440,1169],[451,1187],[461,1201],[473,1201],[483,1204],[494,1186],[505,1204],[516,1207],[527,1211],[537,1205],[547,1206],[558,1213],[568,1217],[580,1218],[591,1227],[602,1222],[613,1226],[623,1226],[635,1222],[645,1221],[667,1212],[678,1214],[688,1216],[699,1217],[710,1224],[730,1231],[742,1237],[763,1239],[775,1239],[785,1238],[797,1241],[807,1238],[818,1241],[829,1242],[850,1243],[862,1235],[872,1251],[884,1237],[895,1236],[905,1234],[915,1222],[927,1222],[938,1225],[948,1217],[958,1225],[981,1221],[992,1229],[1002,1230],[1014,1233],[1024,1234],[1035,1242],[1045,1242],[1056,1236],[1067,1229],[1078,1229],[1089,1224],[1100,1206],[1110,1203],[1121,1213],[1131,1200],[1142,1186],[1153,1184],[1165,1167],[1175,1159],[1187,1157],[1197,1117],[1208,1123],[1219,1125],[1230,1125],[1241,1117],[1252,1095],[1262,1069],[1273,1093],[1283,1120],[1295,1119],[1306,1092],[1316,1067],[1327,1078],[1338,1108],[1349,1085],[1359,1031],[1370,1032],[1381,1046],[1392,1039],[1403,969],[1413,932],[1424,912],[1435,892],[1446,898],[1456,829],[1468,836],[1479,797],[1489,762],[1511,713],[1522,656],[1533,733],[1543,642]];
const meanB: Pt[] = [[116,713],[126,689],[137,678],[148,675],[159,754],[169,577],[180,649],[190,643],[202,644],[212,619],[223,558],[233,541],[244,584],[255,490],[266,353],[276,320],[287,260],[298,201],[308,219],[319,110]];
const meanPeak: Pt[] = [[330,1496],[340,1542],[351,1480],[362,1437],[373,1478],[383,1323],[394,1317],[405,1540]];
const meanC: Pt[] = [[415,134],[427,76],[437,308],[448,199],[459,250],[469,288],[480,297],[490,154],[502,416],[512,250],[522,444],[533,372],[545,522],[555,553],[565,583],[576,504],[587,591],[598,584],[608,697],[620,697],[630,714],[641,766],[652,794],[662,807],[673,849],[695,887],[705,910],[716,973],[727,970],[737,1000],[748,1013],[759,985],[780,1024],[791,1004],[801,1057],[812,1092],[823,1058],[833,1078],[845,1085],[855,1093],[866,1100],[877,1083],[887,1058],[898,1112],[909,1138],[919,1158],[930,1166],[940,1152],[951,1158],[962,1168],[972,1179],[983,1178],[994,1182],[1005,1190],[1016,1213],[1027,1209],[1037,1210],[1048,1208],[1059,1212],[1070,1205],[1091,1206],[1102,1211],[1113,1210],[1134,1213],[1145,1218],[1155,1216],[1166,1210],[1177,1206],[1187,1205],[1198,1207],[1208,1201],[1219,1201],[1230,1214],[1241,1200],[1252,1203],[1262,1208],[1273,1218],[1283,1190],[1294,1157],[1305,1133],[1315,1148],[1326,1155],[1337,1152],[1348,1150],[1369,1220],[1380,1226],[1391,1228],[1402,1228],[1412,1243],[1423,1253],[1445,1282]];
const meanLine = [
  ...meanA.map(leftFrame), ...meanB.map(rightFrame), ...meanPeak.map(peakFrame), ...meanC.map(rightFrame),
].map((p) => p.map((v) => v.toFixed(1)).join(",")).join(" ");

const months: [string, number][] = [
  ["Sep", 2803.4], ["Oct", 2928.5], ["Nov", 3056.5], ["Dec", 3181.6],
  ["Jan", 3309.7], ["Feb", 3438], ["Mar", 3554.3], ["Apr", 3682.6],
];

function DailyChart() {
  return (
    <Card>
      <TabBar>
        <ActiveTab>Daily cases</ActiveTab>
        <InactiveTab>Daily deaths</InactiveTab>
      </TabBar>
      <Svg width="1135" height="1760" viewBox="2686 141 1135 1760">
        {Array.from({ length: 18 }, (_, i) => {
          const y = AXIS_Y - i * 93.22;
          return (
            <React.Fragment key={i}>
              {i > 0 && <path d={`M2779 ${y}H3788`} stroke="#e6e6e6" strokeWidth="1.6" />}
              <text x="2753.3" y={y + 7.8} textAnchor="end" fontSize="20" fill="#666">{i * 50}</text>
            </React.Fragment>
          );
        })}
        {bars.map(([x, y], i) => (
          <rect key={i} x={x - 0.6} y={y - 0.5} width="10" height={AXIS_Y - y} fill="#add8e6" stroke="#fff" strokeWidth="1.3" />
        ))}
        <path d={`M2779 ${AXIS_Y}H3788`} stroke="#ccd6eb" strokeWidth="1.7" />
        {months.map(([t, x]) => (
          <React.Fragment key={t}>
            <path d={`M${x} ${AXIS_Y}v16`} stroke="#ccd6eb" strokeWidth="1.7" />
            <text x={x + 1} y="1788" textAnchor="middle" fontSize="19.2" fill="#666">{t}</text>
          </React.Fragment>
        ))}
        <polyline points={meanLine} fill="none" stroke="#008b8b" strokeWidth="3.7" strokeLinejoin="round" strokeLinecap="round" />
        <circle cx="3059" cy="1836" r="10.5" fill="#add8e6" />
        <path d="M3230 1837.5h27.5" stroke="#008b8b" strokeWidth="3" />
        <circle cx="3243.6" cy="1837.5" r="6.6" fill="#008b8b" />
        <g fontSize="20" fontWeight="600" fill="#333">
          <text x="3081.5" y="1845" textLength="114.5" lengthAdjust="spacingAndGlyphs">Daily cases</text>
          <text x="3266.5" y="1845" textLength="192" lengthAdjust="spacingAndGlyphs">7 day rolling mean</text>
        </g>
      </Svg>
    </Card>
  );
}

/* ---------- icons ---------- */

const MedkitIcon = () => (
  <svg width="24" height="23" viewBox="0 0 24 23">
    <path d="M8 5V2.8h8V5" fill="none" stroke="#fff" strokeWidth="2.6" strokeLinejoin="round" />
    <rect y="4.5" width="24" height="17.5" rx="3" fill="#fff" />
    <path d="M12 9.2v7.2M8 12.8h8" stroke="#006687" strokeWidth="2.6" />
  </svg>
);

const CodeIcon = () => (
  <svg width="28" height="22" viewBox="0 0 28 22" fill="none" stroke="#fff">
    <path d="M9.2 5.2L3 11l6.2 5.8M18.8 5.2L25 11l-6.2 5.8" strokeWidth="4" />
    <path d="M16.6 1L11.4 21" strokeWidth="3.6" />
  </svg>
);

export default function App() {
  return (
    <Page>
      <GlobalStyle />
      <Navbar>
        <Brand>COVID Tracker</Brand>
        <NavTab><MedkitIcon />COVID-19 Tracker</NavTab>
        <SourceLink><CodeIcon />Source Code</SourceLink>
      </Navbar>
      <Body>
        <Sidebar>
          <FieldLabel>FIPS codes:</FieldLabel>
          <Select>1001<Caret /></Select>
          <SearchButton>Search</SearchButton>
        </Sidebar>
        <Dashboard>
          <Column>
            <ValueBox $bg="#ffa500" $h={183} $gap={13}><Value>32,070,058</Value><Caption>USA CASES</Caption></ValueBox>
            <ValueBox $bg="#f2dede" $h={183} $gap={13}><Value>571,471</Value><Caption>USA DEATHS</Caption></ValueBox>
            <ValueBox $bg="#808080" $h={182} $gap={14}><Value>1.8%</Value><Caption>USA DEATH RATE</Caption></ValueBox>
            <CountyTable />
          </Column>
          <Column>
            <CumulativeChart />
            <MapPanel />
          </Column>
          <Column>
            <DailyChart />
          </Column>
        </Dashboard>
      </Body>
    </Page>
  );
}
